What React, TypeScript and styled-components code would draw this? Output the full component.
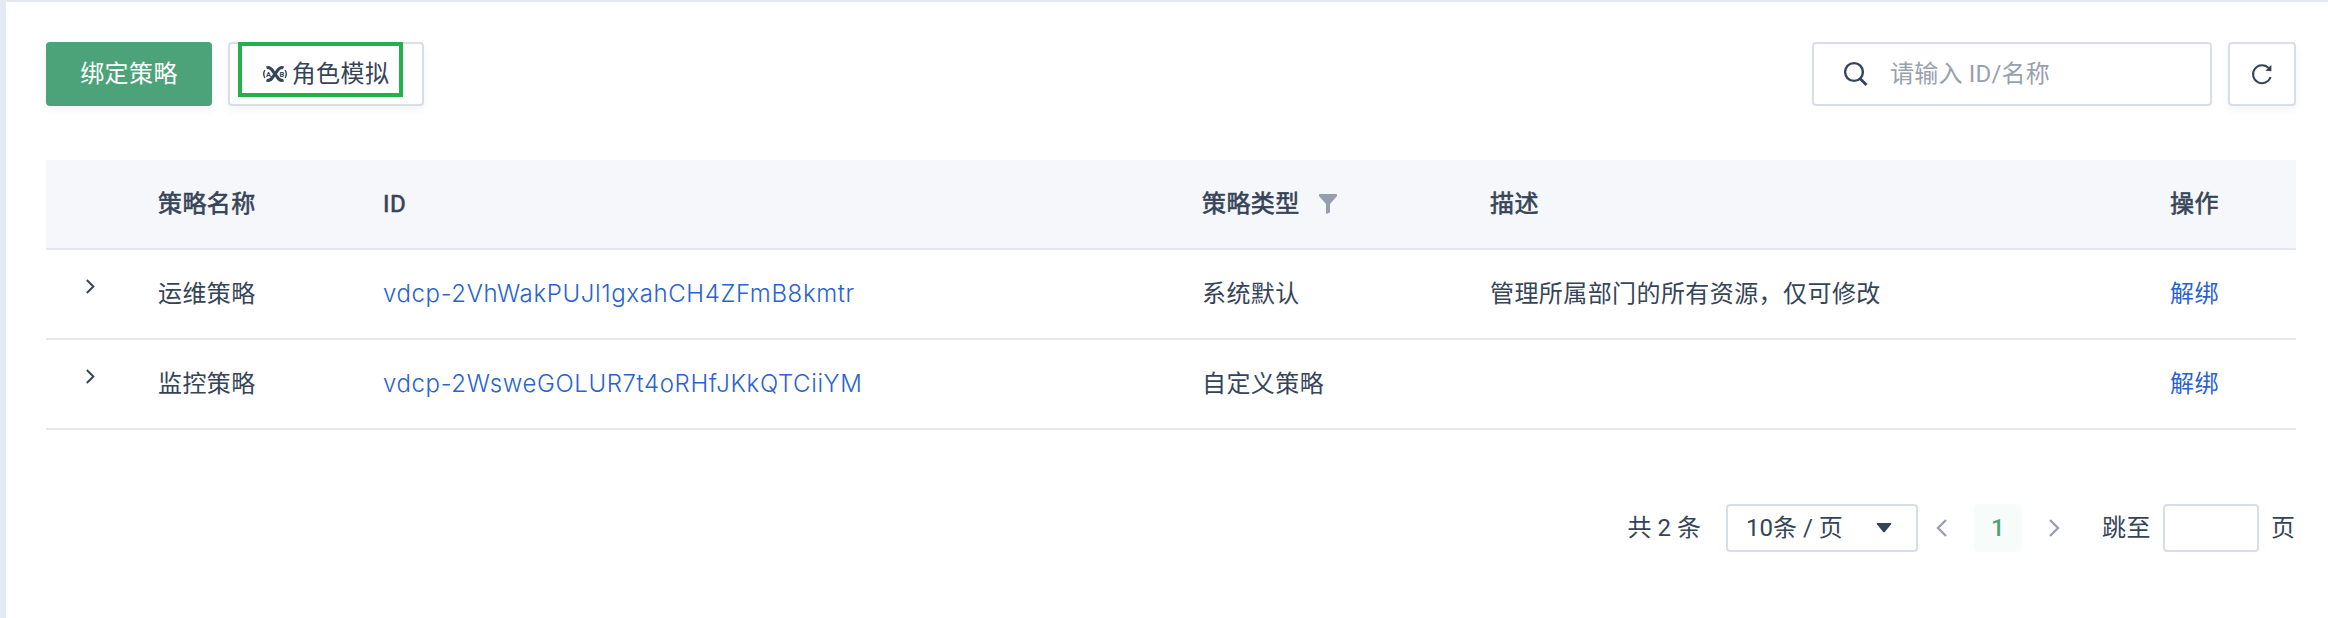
import React from "react";
import styled, { createGlobalStyle } from "styled-components";

const ink = "#364458";
const line = "#d8dee8";
const blue = "#2a63d0";
const green = "#4da379";

const Global = createGlobalStyle`
  * { box-sizing: border-box; }
  html, body { margin: 0; background: #fff; }
  body {
    font-family: Roboto, "Noto Sans CJK SC", sans-serif;
    font-size: 24px;
    line-height: 36px;
    letter-spacing: 0.42px;
    color: ${ink};
  }
`;

const Page = styled.main`
  height: 618px;
  border-left: 6px solid #e5e9f2;
  border-top: 2px solid #e5e9ef;
  background: #fff;
  padding: 40px 32px 0 40px;
`;

const Toolbar = styled.div`
  display: flex;
  gap: 16px;
  height: 64px;
`;

const Button = styled.button<{ $primary?: boolean; $width: number }>`
  position: relative;
  display: flex;
  align-items: center;
  justify-content: center;
  gap: 5px;
  width: ${(p) => p.$width}px;
  height: 64px;
  padding: 0;
  border: 2px solid ${(p) => (p.$primary ? green : line)};
  border-radius: 4px;
  background: ${(p) => (p.$primary ? green : "#fff")};
  color: ${(p) => (p.$primary ? "#fff" : ink)};
  font: inherit;
  letter-spacing: inherit;
  box-shadow: 0 4px 8px rgba(54, 68, 88, 0.06);
`;

const Highlight = styled.span`
  position: absolute;
  left: 8px;
  top: -2px;
  width: 165px;
  height: 55px;
  border: 4px solid #22b14c;
`;

const Search = styled.label`
  display: flex;
  align-items: center;
  width: 400px;
  margin-left: auto;
  padding-left: 28px;
  gap: 22px;
  border: 2px solid ${line};
  border-radius: 4px;
`;

const SearchInput = styled.input`
  flex: 1;
  min-width: 0;
  padding: 0;
  border: 0;
  outline: 0;
  background: none;
  font: inherit;
  letter-spacing: 0.2px;
  &::placeholder { color: #98a1ae; opacity: 1; }
`;

const Table = styled.div`
  margin-top: 54px;
`;

const Row = styled.div<{ $head?: boolean }>`
  display: grid;
  grid-template-columns: 112px 225px 819px 288px 680px 126px;
  align-items: center;
  height: 90px;
  border-bottom: 2px solid #e5e9ef;
  background: ${(p) => (p.$head ? "#f5f7fb" : "#fff")};
  -webkit-text-stroke: ${(p) => (p.$head ? "0.6px" : "0")} ${ink};
`;

const Cell = styled.div`
  display: flex;
  align-items: center;
  gap: 19px;
  white-space: nowrap;
`;

const Expander = styled.div`
  padding: 0 0 15px 40px;
  line-height: 0;
`;

const IdLink = styled.a`
  color: ${blue};
  font-family: Inter, sans-serif;
  font-weight: 350;
  letter-spacing: 0.62px;
`;

const Action = styled.a`
  color: ${blue};
`;

const Pager = styled.div`
  display: flex;
  align-items: center;
  justify-content: flex-end;
  height: 48px;
  margin-top: 74px;
`;

const Total = styled.span`
  margin-right: 25px;
  letter-spacing: 0;
`;

const Select = styled.div`
  display: flex;
  align-items: center;
  justify-content: space-between;
  width: 192px;
  height: 48px;
  padding: 0 24px 0 18px;
  border: 2px solid ${line};
  border-radius: 4px;
  letter-spacing: 0;
`;

const Arrow = styled.span<{ $end?: boolean }>`
  width: 56px;
  padding: 0 18px;
  display: flex;
  justify-content: ${(p) => (p.$end ? "flex-end" : "flex-start")};
`;

const Current = styled.span`
  width: 48px;
  height: 48px;
  line-height: 48px;
  text-align: center;
  border-radius: 4px;
  background: #f7fcfa;
  color: ${green};
  font-weight: 500;
`;

const JumpLabel = styled.span`
  width: 49px;
  margin-left: 24px;
  white-space: nowrap;
`;

const JumpInput = styled.input`
  width: 96px;
  height: 48px;
  margin: 0 12px;
  border: 2px solid ${line};
  border-radius: 4px;
  background: #fff;
`;

const JumpUnit = styled.span`
  width: 25px;
`;

const RoleIcon = () => (
  <svg width="24" height="18" viewBox="0 0 24 18" fill="none" stroke={ink}>
    <path d="M3.500 2.800C8.500 1 9.500 6.500 12 9s3.500 8 8.500 6.200" strokeWidth="3" />
    <path d="M20.500 2.800C15.500 1 14.500 6.500 12 9s-3.500 8-8.500 6.200" strokeWidth="3" />
    <path d="M1.900 5Q-.5 9 1.900 13M22.100 5Q24.500 9 22.100 13" strokeWidth="1.400" />
    <g fill={ink} stroke="none" fontFamily="Roboto, sans-serif" fontSize="7.500" fontWeight="700" letterSpacing="0">
      <text x="3" y="11.700">A</text>
      <text x="16.600" y="11.700">B</text>
    </g>
  </svg>
);

const SearchIcon = () => (
  <svg width="26" height="26" viewBox="0 0 26 26" fill="none" stroke={ink} strokeWidth="2.400">
    <circle cx="12" cy="11" r="8.900" />
    <path d="M18 17.500 24.500 24" strokeWidth="2.800" />
  </svg>
);

const RefreshIcon = () => (
  <svg width="24" height="24" viewBox="0 0 24 24" fill="none" stroke={ink} strokeWidth="2">
    <path d="M20.600 15A9 9 0 1 1 18.800 6.200" />
    <path d="M21.400 2.800v6.400l-6-.4z" fill={ink} stroke="none" />
  </svg>
);

const FunnelIcon = () => (
  <svg width="18" height="20" viewBox="0 0 18 20" fill="#959eac">
    <path d="M0 0h18v2L11 10v8.500L7 20V10L0 2z" />
  </svg>
);

const Chevron = ({ left, small }: { left?: boolean; small?: boolean }) => (
  <svg
    width={small ? 9 : 11}
    height={small ? 15 : 18}
    viewBox="0 0 11 18"
    fill="none"
    stroke={small ? ink : "#98a1ae"}
    strokeWidth="2.400"
  >
    <path d={left ? "M10 1 2 9l8 8" : "M1 1l8 8-8 8"} />
  </svg>
);

const Caret = () => (
  <svg width="16" height="10" viewBox="0 0 16 10" fill={ink}>
    <path d="M1.500 0h13q1.500 0 .6 1.300L9 8.700q-1 1-2 0L.9 1.300Q0 0 1.500 0z" />
  </svg>
);

const policies = [
  { name: "运维策略", id: "vdcp-2VhWakPUJl1gxahCH4ZFmB8kmtr", type: "系统默认", note: "管理所属部门的所有资源，仅可修改" },
  { name: "监控策略", id: "vdcp-2WsweGOLUR7t4oRHfJKkQTCiiYM", type: "自定义策略", note: "" },
];

export default function App() {
  return (
    <Page>
      <Global />
      <Toolbar>
        <Button $primary $width={166}>绑定策略</Button>
        <Button $width={196}>
          <RoleIcon />
          角色模拟
          <Highlight />
        </Button>
        <Search>
          <SearchIcon />
          <SearchInput placeholder="请输入 ID/名称" />
        </Search>
        <Button $width={68}>
          <RefreshIcon />
        </Button>
      </Toolbar>
      <Table>
        <Row $head>
          <Cell />
          <Cell>策略名称</Cell>
          <Cell>ID</Cell>
          <Cell>
            策略类型
            <FunnelIcon />
          </Cell>
          <Cell>描述</Cell>
          <Cell>操作</Cell>
        </Row>
        {policies.map((p) => (
          <Row key={p.id}>
            <Expander>
              <Chevron small />
            </Expander>
            <Cell>{p.name}</Cell>
            <Cell>
              <IdLink>{p.id}</IdLink>
            </Cell>
            <Cell>{p.type}</Cell>
            <Cell>{p.note}</Cell>
            <Cell>
              <Action>解绑</Action>
            </Cell>
          </Row>
        ))}
      </Table>
      <Pager>
        <Total>共 2 条</Total>
        <Select>
          10条 / 页
          <Caret />
        </Select>
        <Arrow>
          <Chevron left />
        </Arrow>
        <Current>1</Current>
        <Arrow $end>
          <Chevron />
        </Arrow>
        <JumpLabel>跳至</JumpLabel>
        <JumpInput />
        <JumpUnit>页</JumpUnit>
      </Pager>
    </Page>
  );
}
